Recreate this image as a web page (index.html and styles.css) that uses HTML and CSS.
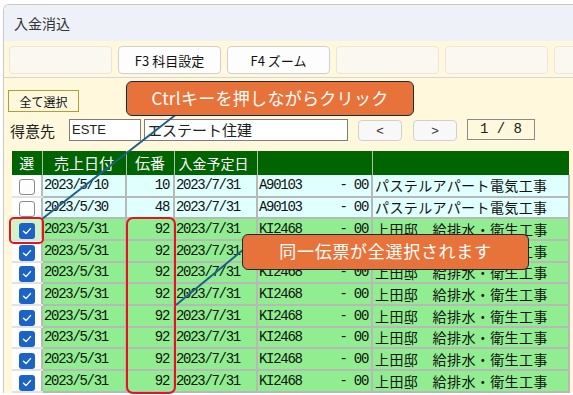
FILE: index.html
```html
<!DOCTYPE html>
<html lang="ja">
<head>
  <meta charset="UTF-8" />
  <title>入金消込</title>
  <link rel="stylesheet" href="styles.css">
</head>
<body>

  <div class="window">
    <div class="titlebar">入金消込</div>

    <div class="toolbar">
      <button class="fkey blank"></button>
      <button class="fkey">F3 科目設定</button>
      <button class="fkey">F4 ズーム</button>
      <button class="fkey blank"></button>
      <button class="fkey blank"></button>
      <button class="fkey blank"></button>
    </div>

    <div class="panel">
      <button class="select-all">全て選択</button>

      <div class="customer-row">
        <span class="label">得意先</span>
        <div class="field code">ESTE</div>
        <div class="field name">エステート住建</div>
        <button class="nav">&lt;</button>
        <button class="nav">&gt;</button>
        <div class="pager">1 / 8</div>
      </div>

      <table class="grid">
        <colgroup>
          <col style="width:30px">
          <col style="width:84px">
          <col style="width:48px">
          <col style="width:83px">
          <col style="width:115px">
          <col>
        </colgroup>
        <thead>
          <tr>
            <th>選</th>
            <th>売上日付</th>
            <th>伝番</th>
            <th class="left">入金予定日</th>
            <th></th>
            <th></th>
          </tr>
        </thead>
        <tbody id="rows"></tbody>
      </table>
    </div>
  </div>

  <svg class="connectors" width="573" height="395">
    <line x1="178" y1="113" x2="42" y2="219" />
    <line x1="255" y1="240" x2="176" y2="305" />
  </svg>

  <div class="mark mark-check"></div>
  <div class="mark mark-slip"></div>

  <div class="callout callout-ctrl">Ctrlキーを押しながらクリック</div>
  <div class="callout callout-slip">同一伝票が全選択されます</div>

  <script>
    const rows = [
      { on: false, date: '2023/5/10', no: 10, due: '2023/7/31', code: 'A90103', name: 'パステルアパート電気工事' },
      { on: false, date: '2023/5/30', no: 48, due: '2023/7/31', code: 'A90103', name: 'パステルアパート電気工事' }
    ];
    for (let i = 0; i < 8; i++) {
      rows.push({ on: true, date: '2023/5/31', no: 92, due: '2023/7/31', code: 'KI2468', name: '上田邸　給排水・衛生工事' });
    }

    const check = '<svg width="16" height="16" viewBox="0 0 16 16"><polyline points="4.5,8.2 7,10.6 11.5,5.6" fill="none" stroke="#fff" stroke-width="1.4" stroke-linecap="round" stroke-linejoin="round"/></svg>';

    const body = document.getElementById('rows');
    rows.forEach((r, i) => {
      const cls = r.on ? 'picked' : 'open';
      const focus = i === 2 ? ' focus' : '';
      body.innerHTML += `
        <tr class="${cls}">
          <td class="sel${focus}"><span class="box ${r.on ? 'checked' : ''}">${r.on ? check : ''}</span></td>
          <td class="mono">${r.date}</td>
          <td class="mono num">${r.no}</td>
          <td class="mono">${r.due}</td>
          <td class="mono"><span class="sub">- 00</span>${r.code}</td>
          <td class="jp">${r.name}</td>
        </tr>
      `;
    });
  </script>
</body>
</html>
```

FILE: styles.css
```css
body {
  margin: 0;
  background: #fff;
  font-family: "Noto Sans CJK JP", sans-serif;
  color: #222;
  width: 573px;
  height: 395px;
  overflow: hidden;
  position: relative;
}

.window {
  margin: 4px 0 0 3px;
  border-top: 1px solid #c9c9c9;
  border-left: 1px solid #c9c9c9;
  border-top-left-radius: 6px;
  overflow: hidden;
}

.titlebar {
  height: 36px;
  line-height: 36px;
  padding-left: 10px;
  background: #eff1f8;
  font-size: 14px;
  color: #333;
}

.toolbar {
  display: flex;
  gap: 6px;
  height: 37px;
  padding: 5px 0 0 5px;
  box-sizing: border-box;
  background: #fff8dc;
  border-bottom: 1px solid #d6d6d6;
}

.fkey {
  flex: none;
  width: 103px;
  height: 28px;
  border: 1px solid #cfcfcf;
  border-radius: 4px;
  background: #fdfdfd;
  font-family: "Noto Sans CJK JP", sans-serif;
  font-size: 13px;
  color: #111;
  padding: 0;
}

.fkey.blank {
  background: #faf8f1;
  border-color: #ebe6d8;
}

.panel {
  background: #fff8dc;
  padding: 12px 0 0 4px;
  height: 315px;
  box-sizing: border-box;
}

.select-all {
  display: block;
  width: 71px;
  height: 22px;
  padding: 0;
  border: 1px solid #b89a36;
  background: #fff8dc;
  font-family: "Noto Sans CJK JP", sans-serif;
  font-size: 12px;
  color: #111;
}

.customer-row {
  display: flex;
  align-items: center;
  height: 22px;
  margin-top: 7px;
}

.label {
  width: 59px;
  padding-left: 2px;
  font-size: 15px;
  color: #222;
}

.field {
  height: 22px;
  box-sizing: border-box;
  border: 1px solid #7d7d7d;
  background: #fff;
  line-height: 20px;
  padding-left: 2px;
}

.field.code {
  width: 72px;
  font-family: "Liberation Sans", sans-serif;
  font-size: 13px;
}

.field.name {
  width: 204px;
  margin-left: 3px;
  font-size: 15px;
}

.nav {
  width: 44px;
  height: 21px;
  margin-left: 10px;
  padding: 0;
  border: 1px solid #d0d0d0;
  border-radius: 4px;
  background: #f8f8f8;
  font-family: "Liberation Sans", sans-serif;
  font-size: 13px;
  color: #333;
}

.nav + .nav {
  margin-left: 11px;
}

.pager {
  width: 68px;
  height: 21px;
  margin: -2px 0 0 10px;
  box-sizing: border-box;
  border: 1px solid #8a8a8a;
  text-align: center;
  line-height: 19px;
  font-family: "Liberation Mono", monospace;
  font-size: 14px;
}

.grid {
  margin: 10px 0 0 4px;
  width: 558px;
  table-layout: fixed;
  border-collapse: collapse;
}

.grid th {
  height: 24px;
  padding: 0;
  line-height: 20px;
  background: #006400;
  color: #fff;
  font-weight: normal;
  font-size: 15px;
  border-left: 1px solid #a9c6a9;
}

.grid th:first-child {
  border-left: none;
}

.grid th.left {
  text-align: left;
  padding-left: 4px;
  font-size: 14px;
}

.grid tbody tr {
  height: 21.6px;
}

.grid td {
  height: 19.6px;
  line-height: 18px;
  padding: 0 0 0 1px;
  border: 2px solid #b8b8b8;
  border-top: none;
  white-space: nowrap;
  overflow: hidden;
  color: #111;
}

.grid tr.open td {
  background: #e0ffff;
}

.grid tr.picked td {
  background: #90ee90;
}

.grid td.sel {
  background: #fff !important;
  border-right: 1px solid #111;
  border-left: none;
  border-bottom-color: #e2e2e2;
  text-align: center;
  padding: 0;
}

.grid td.sel.focus {
  background: #d2f3c4 !important;
}

.box {
  display: inline-block;
  width: 16px;
  height: 16px;
  box-sizing: border-box;
  border: 1.5px solid #8a8a8a;
  border-radius: 3px;
  background: #fdfdfd;
  vertical-align: middle;
}

.box.checked {
  border: none;
  background: #1b63c6;
}

.box svg {
  display: block;
}

.mono {
  font-family: "Liberation Mono", monospace;
  font-size: 14px;
  letter-spacing: -1.3px;
}

.num {
  text-align: right;
  padding-right: 4px !important;
}

.sub {
  float: right;
  padding-right: 3px;
}

.jp {
  font-size: 14px;
  letter-spacing: 0.4px;
  padding-left: 2px !important;
}

.connectors {
  position: absolute;
  left: 0;
  top: 0;
}

.connectors line {
  stroke: #1e5f8c;
  stroke-width: 2;
}

.mark {
  position: absolute;
  box-sizing: border-box;
  border: 2px solid #e6121c;
}

.mark-check {
  left: 9px;
  top: 217px;
  width: 35px;
  height: 27px;
  border-radius: 5px;
}

.mark-slip {
  left: 126px;
  top: 217px;
  width: 50px;
  height: 177px;
  border-radius: 7px;
}

.callout {
  position: absolute;
  box-sizing: border-box;
  background: #e8733a;
  border: 1.5px solid #1b2a36;
  border-radius: 6px;
  color: #fff;
  text-align: center;
  font-size: 17px;
}

.callout-ctrl {
  left: 126px;
  top: 81px;
  width: 288px;
  height: 35px;
  line-height: 31px;
  letter-spacing: 0.3px;
}

.callout-slip {
  left: 242px;
  top: 234px;
  width: 287px;
  height: 36px;
  line-height: 32px;
  letter-spacing: 0.7px;
}
```
